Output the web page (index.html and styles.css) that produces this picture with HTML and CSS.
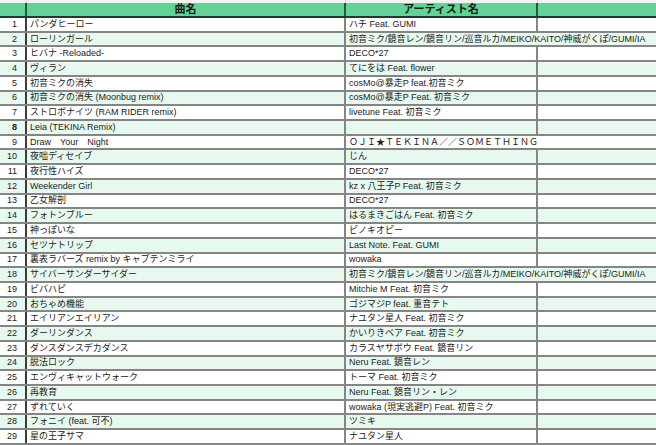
FILE: index.html
```html
<!DOCTYPE html>
<html lang="ja">
<head>
<meta charset="utf-8">
<title>曲リスト</title>
<link rel="stylesheet" href="styles.css">
</head>
<body>
<div class="sheet">
  <div class="strip">
    <div class="sc"></div><div class="sc"></div><div class="sc"></div><div class="sc last"></div>
  </div>
  <div class="row head">
    <div class="c num"></div>
    <div class="c title">曲名</div>
    <div class="c artist">アーティスト名</div>
    <div class="c extra"></div>
  </div>
  <div class="row"><div class="c num">1</div><div class="c title">パンダヒーロー</div><div class="c artist">ハチ Feat. GUMI</div><div class="c extra"></div></div>
  <div class="row alt over"><div class="c num">2</div><div class="c title">ローリンガール</div><div class="c artist">初音ミク/鏡音レン/鏡音リン/巡音ルカ/MEIKO/KAITO/神威がくぽ/GUMI/IA</div><div class="c extra"></div></div>
  <div class="row"><div class="c num">3</div><div class="c title">ヒバナ -Reloaded-</div><div class="c artist">DECO*27</div><div class="c extra"></div></div>
  <div class="row alt"><div class="c num">4</div><div class="c title">ヴィラン</div><div class="c artist">てにをは Feat. flower</div><div class="c extra"></div></div>
  <div class="row"><div class="c num">5</div><div class="c title">初音ミクの消失</div><div class="c artist">cosMo@暴走P feat.初音ミク</div><div class="c extra"></div></div>
  <div class="row alt"><div class="c num">6</div><div class="c title">初音ミクの消失 (Moonbug remix)</div><div class="c artist">cosMo@暴走P Feat. 初音ミク</div><div class="c extra"></div></div>
  <div class="row"><div class="c num">7</div><div class="c title">ストロボナイツ (RAM RIDER remix)</div><div class="c artist">livetune Feat. 初音ミク</div><div class="c extra"></div></div>
  <div class="row alt"><div class="c num bold">8</div><div class="c title">Leia (TEKINA Remix)</div><div class="c artist"></div><div class="c extra"></div></div>
  <div class="row over"><div class="c num">9</div><div class="c title">Draw　Your　Night</div><div class="c artist">ＯＪＩ★ＴＥＫＩＮＡ／／ＳＯＭＥＴＨＩＮＧ</div><div class="c extra"></div></div>
  <div class="row alt"><div class="c num">10</div><div class="c title">夜咄ディセイブ</div><div class="c artist">じん</div><div class="c extra"></div></div>
  <div class="row"><div class="c num">11</div><div class="c title">夜行性ハイズ</div><div class="c artist">DECO*27</div><div class="c extra"></div></div>
  <div class="row alt"><div class="c num">12</div><div class="c title">Weekender Girl</div><div class="c artist">kz x 八王子P Feat. 初音ミク</div><div class="c extra"></div></div>
  <div class="row"><div class="c num">13</div><div class="c title">乙女解剖</div><div class="c artist">DECO*27</div><div class="c extra"></div></div>
  <div class="row alt"><div class="c num">14</div><div class="c title">フォトンブルー</div><div class="c artist">はるまきごはん Feat. 初音ミク</div><div class="c extra"></div></div>
  <div class="row"><div class="c num">15</div><div class="c title">神っぽいな</div><div class="c artist">ピノキオピー</div><div class="c extra"></div></div>
  <div class="row alt"><div class="c num">16</div><div class="c title">セツナトリップ</div><div class="c artist">Last Note. Feat. GUMI</div><div class="c extra"></div></div>
  <div class="row"><div class="c num">17</div><div class="c title">裏表ラバーズ remix by キャプテンミライ</div><div class="c artist">wowaka</div><div class="c extra"></div></div>
  <div class="row alt over"><div class="c num">18</div><div class="c title">サイバーサンダーサイダー</div><div class="c artist">初音ミク/鏡音レン/鏡音リン/巡音ルカ/MEIKO/KAITO/神威がくぽ/GUMI/IA</div><div class="c extra"></div></div>
  <div class="row"><div class="c num">19</div><div class="c title">ビバハピ</div><div class="c artist">Mitchie M Feat. 初音ミク</div><div class="c extra"></div></div>
  <div class="row alt"><div class="c num">20</div><div class="c title">おちゃめ機能</div><div class="c artist">ゴジマジP feat. 重音テト</div><div class="c extra"></div></div>
  <div class="row"><div class="c num">21</div><div class="c title">エイリアンエイリアン</div><div class="c artist">ナユタン星人 Feat. 初音ミク</div><div class="c extra"></div></div>
  <div class="row alt"><div class="c num">22</div><div class="c title">ダーリンダンス</div><div class="c artist">かいりきベア Feat. 初音ミク</div><div class="c extra"></div></div>
  <div class="row"><div class="c num">23</div><div class="c title">ダンスダンスデカダンス</div><div class="c artist">カラスヤサボウ Feat. 鏡音リン</div><div class="c extra"></div></div>
  <div class="row alt"><div class="c num">24</div><div class="c title">脱法ロック</div><div class="c artist">Neru Feat. 鏡音レン</div><div class="c extra"></div></div>
  <div class="row"><div class="c num">25</div><div class="c title">エンヴィキャットウォーク</div><div class="c artist">トーマ Feat. 初音ミク</div><div class="c extra"></div></div>
  <div class="row alt"><div class="c num">26</div><div class="c title">再教育</div><div class="c artist">Neru Feat. 鏡音リン・レン</div><div class="c extra"></div></div>
  <div class="row"><div class="c num">27</div><div class="c title">ずれていく</div><div class="c artist">wowaka (現実逃避P) Feat. 初音ミク</div><div class="c extra"></div></div>
  <div class="row alt"><div class="c num">28</div><div class="c title">フォニイ (feat. 可不)</div><div class="c artist">ツミキ</div><div class="c extra"></div></div>
  <div class="row"><div class="c num">29</div><div class="c title">星の王子サマ</div><div class="c artist">ナユタン星人</div><div class="c extra"></div></div>
</div>
</body>
</html>
```

FILE: styles.css
```css
html, body {
  margin: 0;
  padding: 0;
  background: #ffffff;
}

body {
  font-family: "Liberation Sans", "Noto Sans CJK JP", sans-serif;
  font-size: 9px;
  color: #222222;
  overflow: hidden;
}

.sheet {
  width: 656px;
  display: flex;
  flex-direction: column;
}

.strip,
.row {
  display: grid;
  grid-template-columns: 27px 319px 192px 1fr;
}

.strip {
  height: 3px;
  background: #f1f3f4;
}

.sc {
  border-right: 1px solid #d6d6d6;
}

.sc.last {
  border-right: none;
}

.row {
  box-sizing: border-box;
  height: 14.72px;
  border-bottom: 2px solid #858585;
  background: #ffffff;
}

.row.alt {
  background: #e7f9ef;
}

.c {
  box-sizing: border-box;
  display: flex;
  align-items: center;
  white-space: nowrap;
  padding-left: 3px;
  line-height: 1;
  min-width: 0;
}

.num {
  justify-content: flex-end;
  padding-left: 0;
  padding-right: 8px;
  border-right: 2px solid #3c3c3c;
}

.num.bold {
  font-weight: 700;
}

.title,
.artist {
  border-right: 2px solid #858585;
}

.title {
  overflow: hidden;
}

.artist {
  overflow: visible;
  position: relative;
  z-index: 1;
}

.row.over .artist {
  border-right-color: transparent;
}

.row.head {
  height: 15px;
  background: #63d297;
  border-bottom: 2px solid #1f3a2b;
  font-weight: 700;
  font-size: 11px;
  color: #1b1b1b;
}

.row.head .c {
  justify-content: center;
  padding-left: 0;
  border-right: 2px solid #24593b;
}

.row.head .extra {
  border-right: none;
}
```
